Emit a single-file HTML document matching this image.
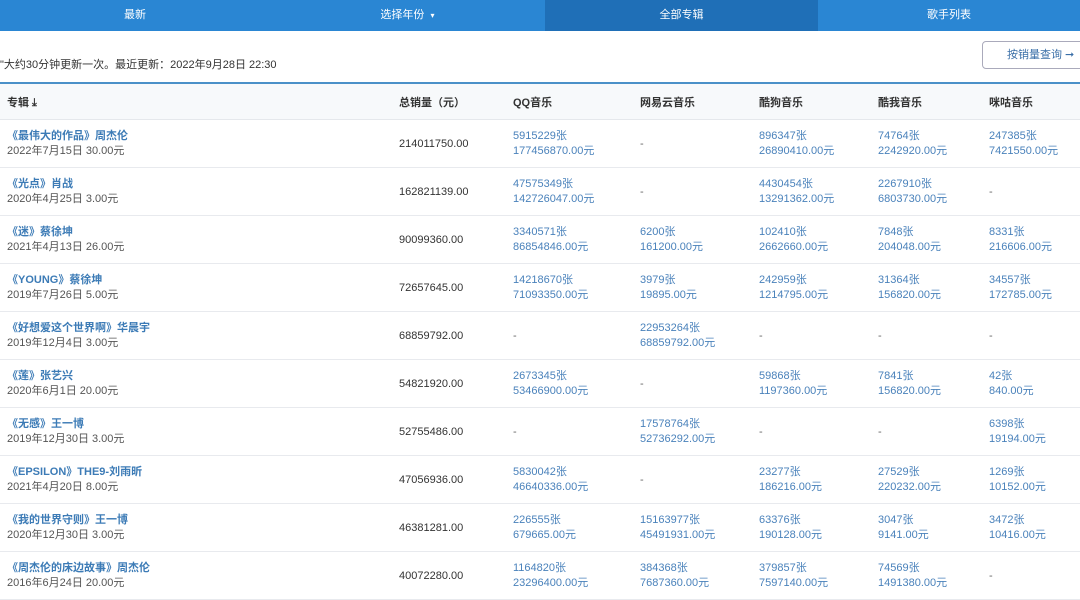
<!DOCTYPE html>
<html><head><meta charset="utf-8"><style>
*{margin:0;padding:0;box-sizing:border-box}
body{width:1080px;height:595px;overflow:hidden;background:#fff;font-family:"Liberation Sans","Noto Sans CJK SC",sans-serif;color:#333;font-size:11px;position:relative}
.nav{position:absolute;top:0;left:0;width:1080px;height:31px;background:#2a86d3;color:#fff;font-size:11px}
.nav div{position:absolute;top:0;height:31px;line-height:31px;text-align:center}
.info{position:absolute;top:56px;left:0;font-size:11px;color:#333}
.btn{position:absolute;left:982px;top:41px;width:110px;height:28px;border:1px solid #aab;border-radius:4px;font-size:11px;color:#3a6fa8;line-height:27px;padding-left:24px}
.line{position:absolute;top:82px;left:0;width:1080px;height:2px;background:#4a90c8}
.hdr{position:absolute;top:84px;left:0;width:1080px;height:36px;background:#f7f9fb;border-bottom:1px solid #e5e8ec;font-weight:bold;font-size:11px;color:#333}
.hdr span{position:absolute;top:10px}
.row{position:absolute;left:0;width:1080px;height:48px;border-bottom:1px solid #e8eaee}
.row span{position:absolute;line-height:15px}
.t{top:9px;left:7px;color:#3c7bb6;font-weight:bold}
.d{top:24px;left:7px;color:#555}
.tot{top:17px;left:399px;color:#333}
.c{top:9px;color:#4a82bb}
.dash{top:17px;color:#666}
</style></head><body>
<div class="nav">
<div style="left:0;width:270px">最新</div>
<div style="left:270px;width:275px">选择年份 &nbsp;<span style="font-size:8px">▾</span></div>
<div style="left:545px;width:273px;background:#1f6fb7">全部专辑</div>
<div style="left:818px;width:262px">歌手列表</div>
</div>
<div class="info">"大约30分钟更新一次。最近更新：2022年9月28日 22:30</div>
<div class="btn">按销量查询 ➞</div>
<div class="line"></div>
<div class="hdr">
<span style="left:7px">专辑 ⤓</span><span style="left:399px">总销量（元）</span><span style="left:513px">QQ音乐</span><span style="left:640px">网易云音乐</span><span style="left:759px">酷狗音乐</span><span style="left:878px">酷我音乐</span><span style="left:989px">咪咕音乐</span>
</div>
<div class="row" style="top:120px"><span class="t">《最伟大的作品》周杰伦</span><span class="d">2022年7月15日 30.00元</span><span class="tot">214011750.00</span><span class="c" style="left:513px">5915229张<br>177456870.00元</span><span class="dash" style="left:640px">-</span><span class="c" style="left:759px">896347张<br>26890410.00元</span><span class="c" style="left:878px">74764张<br>2242920.00元</span><span class="c" style="left:989px">247385张<br>7421550.00元</span></div>
<div class="row" style="top:168px"><span class="t">《光点》肖战</span><span class="d">2020年4月25日 3.00元</span><span class="tot">162821139.00</span><span class="c" style="left:513px">47575349张<br>142726047.00元</span><span class="dash" style="left:640px">-</span><span class="c" style="left:759px">4430454张<br>13291362.00元</span><span class="c" style="left:878px">2267910张<br>6803730.00元</span><span class="dash" style="left:989px">-</span></div>
<div class="row" style="top:216px"><span class="t">《迷》蔡徐坤</span><span class="d">2021年4月13日 26.00元</span><span class="tot">90099360.00</span><span class="c" style="left:513px">3340571张<br>86854846.00元</span><span class="c" style="left:640px">6200张<br>161200.00元</span><span class="c" style="left:759px">102410张<br>2662660.00元</span><span class="c" style="left:878px">7848张<br>204048.00元</span><span class="c" style="left:989px">8331张<br>216606.00元</span></div>
<div class="row" style="top:264px"><span class="t">《YOUNG》蔡徐坤</span><span class="d">2019年7月26日 5.00元</span><span class="tot">72657645.00</span><span class="c" style="left:513px">14218670张<br>71093350.00元</span><span class="c" style="left:640px">3979张<br>19895.00元</span><span class="c" style="left:759px">242959张<br>1214795.00元</span><span class="c" style="left:878px">31364张<br>156820.00元</span><span class="c" style="left:989px">34557张<br>172785.00元</span></div>
<div class="row" style="top:312px"><span class="t">《好想爱这个世界啊》华晨宇</span><span class="d">2019年12月4日 3.00元</span><span class="tot">68859792.00</span><span class="dash" style="left:513px">-</span><span class="c" style="left:640px">22953264张<br>68859792.00元</span><span class="dash" style="left:759px">-</span><span class="dash" style="left:878px">-</span><span class="dash" style="left:989px">-</span></div>
<div class="row" style="top:360px"><span class="t">《莲》张艺兴</span><span class="d">2020年6月1日 20.00元</span><span class="tot">54821920.00</span><span class="c" style="left:513px">2673345张<br>53466900.00元</span><span class="dash" style="left:640px">-</span><span class="c" style="left:759px">59868张<br>1197360.00元</span><span class="c" style="left:878px">7841张<br>156820.00元</span><span class="c" style="left:989px">42张<br>840.00元</span></div>
<div class="row" style="top:408px"><span class="t">《无感》王一博</span><span class="d">2019年12月30日 3.00元</span><span class="tot">52755486.00</span><span class="dash" style="left:513px">-</span><span class="c" style="left:640px">17578764张<br>52736292.00元</span><span class="dash" style="left:759px">-</span><span class="dash" style="left:878px">-</span><span class="c" style="left:989px">6398张<br>19194.00元</span></div>
<div class="row" style="top:456px"><span class="t">《EPSILON》THE9-刘雨昕</span><span class="d">2021年4月20日 8.00元</span><span class="tot">47056936.00</span><span class="c" style="left:513px">5830042张<br>46640336.00元</span><span class="dash" style="left:640px">-</span><span class="c" style="left:759px">23277张<br>186216.00元</span><span class="c" style="left:878px">27529张<br>220232.00元</span><span class="c" style="left:989px">1269张<br>10152.00元</span></div>
<div class="row" style="top:504px"><span class="t">《我的世界守则》王一博</span><span class="d">2020年12月30日 3.00元</span><span class="tot">46381281.00</span><span class="c" style="left:513px">226555张<br>679665.00元</span><span class="c" style="left:640px">15163977张<br>45491931.00元</span><span class="c" style="left:759px">63376张<br>190128.00元</span><span class="c" style="left:878px">3047张<br>9141.00元</span><span class="c" style="left:989px">3472张<br>10416.00元</span></div>
<div class="row" style="top:552px"><span class="t">《周杰伦的床边故事》周杰伦</span><span class="d">2016年6月24日 20.00元</span><span class="tot">40072280.00</span><span class="c" style="left:513px">1164820张<br>23296400.00元</span><span class="c" style="left:640px">384368张<br>7687360.00元</span><span class="c" style="left:759px">379857张<br>7597140.00元</span><span class="c" style="left:878px">74569张<br>1491380.00元</span><span class="dash" style="left:989px">-</span></div>
</body></html>
